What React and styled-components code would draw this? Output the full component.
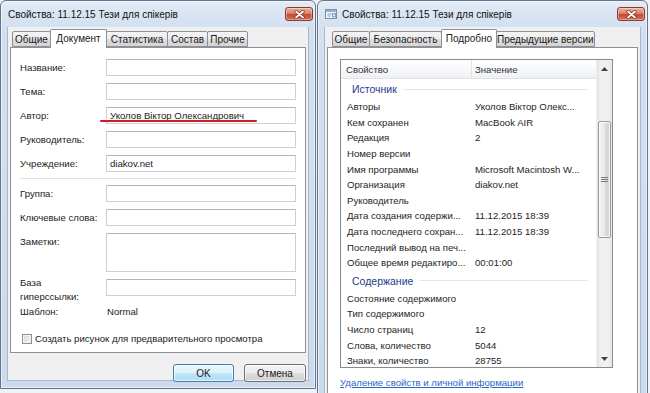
import React from 'react';
import styled, { createGlobalStyle } from 'styled-components';

const GlobalStyle = createGlobalStyle`
  html, body {
    margin: 0;
    padding: 0;
  }
  body {
    width: 650px;
    height: 393px;
    overflow: hidden;
    font-family: "Liberation Sans", Arial, sans-serif;
    font-size: 9.6px;
    color: #1b1b1b;
    background: #eef1f5;
  }
`;

const Desktop = styled.div`
  display: flex;
  align-items: flex-start;
  gap: 1px;
  width: 650px;
  height: 393px;
  overflow: hidden;
`;

const Window = styled.div`
  flex: 0 0 ${p => p.$width}px;
  height: ${p => p.$height}px;
  box-sizing: border-box;
  display: flex;
  flex-direction: column;
  padding: 0 7px 7px;
  border: 1px solid #62748c;
  border-radius: 6px 6px 0 0;
  background: linear-gradient(to bottom, #e2ebf6 0px, #d3e0f0 26px, #cbdaec 100%);
  box-shadow: inset 0 0 0 1px rgba(255, 255, 255, 0.55);
`;

const TitleBar = styled.div`
  display: flex;
  align-items: center;
  gap: 4px;
  height: 26px;
  flex: 0 0 26px;
  color: #111;
  font-size: 10px;
`;

const TitleText = styled.span`
  flex: 1;
  white-space: nowrap;
  overflow: hidden;
`;

const CloseButton = styled.div`
  flex: 0 0 28px;
  height: 14px;
  margin-right: -5px;
  display: flex;
  align-items: center;
  justify-content: center;
  box-sizing: border-box;
  border: 1px solid #8a3b2c;
  border-radius: 3px;
  background: linear-gradient(to bottom, #eab3a4 0%, #d9826c 45%, #c44a31 55%, #d9705a 100%);
  box-shadow: inset 0 0 0 1px rgba(255, 255, 255, 0.35);
`;

const Client = styled.div`
  flex: 1;
  display: flex;
  flex-direction: column;
  min-height: 0;
  background: #f0f0f0;
  border: 1px solid #a9b8cb;
  border-top: none;
  margin: 0 -1px;
  padding: 0 1px;
`;

const TabStrip = styled.div`
  display: flex;
  align-items: flex-end;
  height: 18px;
  margin-top: 2px;
  padding-left: ${p => p.$indent}px;
  position: relative;
  z-index: 1;
`;

const Tab = styled.div`
  flex: 0 0 ${p => p.$w}px;
  box-sizing: border-box;
  height: ${p => (p.$active ? 19 : 16)}px;
  margin-right: -1px;
  margin-bottom: ${p => (p.$active ? -1 : 0)}px;
  display: flex;
  align-items: center;
  justify-content: center;
  padding-bottom: ${p => (p.$active ? 2 : 0)}px;
  border: 1px solid #8d9099;
  border-bottom: ${p => (p.$active ? 'none' : '1px solid #8d9099')};
  border-radius: 2px 2px 0 0;
  background: ${p =>
    p.$active
      ? '#fff'
      : 'linear-gradient(to bottom, #f4f4f4 0%, #ececec 50%, #dedede 51%, #d4d4d4 100%)'};
  position: relative;
  z-index: ${p => (p.$active ? 2 : 1)};
  white-space: nowrap;
  color: #1b1b1b;
  font-size: 10px;
`;

const Panel = styled.div`
  box-sizing: border-box;
  margin: 0 1px;
  height: ${p => (p.$h ? `${p.$h}px` : 'auto')};
  flex: ${p => (p.$h ? '0 0 auto' : '1')};
  background: #fff;
  border: 1px solid #8d9099;
  padding: ${p => p.$pad};
`;

/* Документ tab */

const FieldRow = styled.div`
  display: flex;
  align-items: flex-start;
  margin-top: ${p => p.$gap || 0}px;
`;

const Label = styled.div`
  flex: 0 0 86px;
  line-height: ${p => (p.$wrap ? 14 : 17)}px;
  margin-top: ${p => (p.$wrap ? -3 : 0)}px;
`;

const TextBox = styled.div`
  flex: 1;
  position: relative;
  box-sizing: border-box;
  height: ${p => p.$h || 17}px;
  line-height: 15px;
  padding-left: 3px;
  border: 1px solid #cdd0d5;
  border-top-color: #b2b5bb;
  background: #fff;
  white-space: nowrap;
`;

const PlainValue = styled.div`
  flex: 1;
  line-height: 14px;
  padding-left: 1px;
`;

const Plain = styled.div`
  flex: 0 0 86px;
  line-height: 14px;
`;

const RedMark = styled.div`
  position: absolute;
  left: -7px;
  top: 12px;
  width: 157px;
  height: 2px;
  border-radius: 1px;
  background: #d11a22;
`;

const Separator = styled.div`
  height: 1px;
  margin: 6px 0 6px;
  background: #dcdfe3;
`;

const CheckRow = styled.label`
  display: flex;
  align-items: center;
  gap: 3px;
  margin-top: 14px;
  margin-left: 2px;
  line-height: 12px;
`;

const CheckBox = styled.span`
  width: 10px;
  height: 10px;
  box-sizing: border-box;
  border: 1px solid #8e8f8f;
  background: linear-gradient(135deg, #d9d9d9 0%, #f2f2f2 100%);
  box-shadow: inset 0 0 0 1px #f4f4f4;
`;

const ButtonBar = styled.div`
  display: flex;
  justify-content: flex-end;
  gap: 10px;
  margin-top: 11px;
  padding-right: 1px;
`;

const Button = styled.div`
  width: ${p => p.$w}px;
  height: 18px;
  box-sizing: border-box;
  display: flex;
  align-items: center;
  justify-content: center;
  border: 1px solid ${p => (p.$default ? '#3c7fb1' : '#707070')};
  border-radius: 3px;
  background: ${p =>
    p.$default
      ? 'linear-gradient(to bottom, #ecf7fd 0%, #ddf1fb 50%, #c3e6f8 51%, #b2dcf3 100%)'
      : 'linear-gradient(to bottom, #f4f4f4 0%, #ebebeb 50%, #dddddd 51%, #cfcfcf 100%)'};
  box-shadow: inset 0 0 0 1px rgba(255, 255, 255, 0.7);
  color: #1b1b1b;
  font-size: 10px;
`;

/* Подробно tab */

const ListView = styled.div`
  display: flex;
  width: 273px;
  height: 309px;
  box-sizing: border-box;
  border: 1px solid #868a91;
  background: #fff;
`;

const ListBody = styled.div`
  flex: 1;
  display: flex;
  flex-direction: column;
  overflow: hidden;
`;

const HeaderRow = styled.div`
  display: flex;
  height: 19px;
  flex: 0 0 19px;
  box-sizing: border-box;
  border-bottom: 1px solid #dfe2e6;
  background: linear-gradient(to bottom, #ffffff 0%, #f6f7f9 60%, #eef0f3 100%);
  color: #333;
`;

const HeaderCell = styled.div`
  flex: 0 0 ${p => p.$w}px;
  box-sizing: border-box;
  display: flex;
  align-items: center;
  padding-left: ${p => p.$pad}px;
  border-right: 1px solid #e1e3e7;
`;

const GroupRow = styled.div`
  display: flex;
  align-items: center;
  flex: 0 0 20px;
  height: 20px;
  padding: 0 8px 0 11px;
  color: #1e3a8c;
  font-size: 10.5px;
`;

const GroupLine = styled.div`
  flex: 1;
  height: 1px;
  margin-left: 6px;
  background: #e2e7ef;
`;

const PropRow = styled.div`
  display: flex;
  align-items: center;
  flex: 0 0 15.6px;
  height: 15.6px;
  white-space: nowrap;
  color: #1e1e1e;
`;

const PropName = styled.div`
  flex: 0 0 131px;
  box-sizing: border-box;
  padding-left: 6px;
  overflow: hidden;
`;

const PropValue = styled.div`
  flex: 1;
  padding-left: 3px;
  overflow: hidden;
`;

const ScrollBar = styled.div`
  flex: 0 0 15px;
  display: flex;
  flex-direction: column;
  background: linear-gradient(to right, #e4e4e4 0%, #f1f1f1 30%, #f1f1f1 70%, #e6e6e6 100%);
  border-left: 1px solid #efefef;
`;

const ArrowButton = styled.div`
  flex: 0 0 17px;
  display: flex;
  align-items: center;
  justify-content: center;
  margin-top: ${p => (p.$down ? 'auto' : 0)};
`;

const Thumb = styled.div`
  margin: 44px 1px 0;
  height: 117px;
  box-sizing: border-box;
  display: flex;
  align-items: center;
  justify-content: center;
  border: 1px solid #9a9a9a;
  border-radius: 2px;
  background: linear-gradient(to right, #f3f3f3 0%, #e9e9e9 50%, #d9d9d9 51%, #d4d4d4 100%);
  box-shadow: inset 0 0 0 1px rgba(255, 255, 255, 0.8);
`;

const Link = styled.a`
  display: block;
  margin-top: 9px;
  color: #2a67c4;
  text-decoration: underline;
  line-height: 12px;
`;

const CloseGlyph = () => (
  <svg width="11" height="9" viewBox="0 0 11 9">
    <path d="M2 1.5 L9 7.5 M9 1.5 L2 7.5" stroke="#7a2a1e" strokeWidth="3.2" strokeLinecap="round" />
    <path d="M2 1.5 L9 7.5 M9 1.5 L2 7.5" stroke="#fff" strokeWidth="1.8" strokeLinecap="round" />
  </svg>
);

const PropsIcon = () => (
  <svg width="13" height="12" viewBox="0 0 13 12">
    <rect x="0.5" y="1.5" width="11" height="9" fill="#f4f7fb" stroke="#7d8ea6" />
    <rect x="1" y="2" width="10" height="2" fill="#8fb0d8" />
    <path d="M2.5 6h4M2.5 8h3" stroke="#8a96a8" />
    <rect x="7.5" y="5.5" width="3" height="3.5" fill="#d7e5f5" stroke="#6f8bb0" strokeWidth="0.8" />
  </svg>
);

const Arrow = ({ down }) => (
  <svg width="7" height="4" viewBox="0 0 7 4">
    <path d={down ? 'M0 0 H7 L3.5 4 Z' : 'M0 4 H7 L3.5 0 Z'} fill="#404040" />
  </svg>
);

const Grip = () => (
  <svg width="7" height="6" viewBox="0 0 7 6">
    <path d="M0 0.5h7M0 2.5h7M0 4.5h7" stroke="#7c7c7c" />
  </svg>
);

const source = [
  ['Авторы', 'Уколов Віктор Олекс...'],
  ['Кем сохранен', 'MacBook AIR'],
  ['Редакция', '2'],
  ['Номер версии', ''],
  ['Имя программы', 'Microsoft Macintosh W...'],
  ['Организация', 'diakov.net'],
  ['Руководитель', ''],
  ['Дата создания содержи...', '11.12.2015 18:39'],
  ['Дата последнего сохран...', '11.12.2015 18:39'],
  ['Последний вывод на печ...', ''],
  ['Общее время редактиро...', '00:01:00'],
];

const content = [
  ['Состояние содержимого', ''],
  ['Тип содержимого', ''],
  ['Число страниц', '12'],
  ['Слова, количество', '5044'],
  ['Знаки, количество', '28755'],
];

const title = 'Свойства: 11.12.15 Тези для спікерів';

function DocumentDialog() {
  return (
    <Window $width={316} $height={389}>
      <TitleBar>
        <TitleText>{title}</TitleText>
        <CloseButton><CloseGlyph /></CloseButton>
      </TitleBar>
      <Client>
        <TabStrip $indent={3}>
          <Tab $w={39}>Общие</Tab>
          <Tab $w={57} $active>Документ</Tab>
          <Tab $w={62}>Статистика</Tab>
          <Tab $w={41}>Состав</Tab>
          <Tab $w={41}>Прочие</Tab>
        </TabStrip>
        <Panel $h={306} $pad="11px 9px 0 9px">
          <FieldRow><Label>Название:</Label><TextBox /></FieldRow>
          <FieldRow $gap={7}><Label>Тема:</Label><TextBox /></FieldRow>
          <FieldRow $gap={7}>
            <Label>Автор:</Label>
            <TextBox>Уколов Віктор Олександрович<RedMark /></TextBox>
          </FieldRow>
          <FieldRow $gap={7}><Label>Руководитель:</Label><TextBox /></FieldRow>
          <FieldRow $gap={7}><Label>Учреждение:</Label><TextBox>diakov.net</TextBox></FieldRow>
          <Separator />
          <FieldRow><Label>Группа:</Label><TextBox /></FieldRow>
          <FieldRow $gap={7}><Label>Ключевые слова:</Label><TextBox /></FieldRow>
          <FieldRow $gap={7}><Label>Заметки:</Label><TextBox $h={39} /></FieldRow>
          <FieldRow $gap={7}>
            <Label $wrap>База<br />гиперссылки:</Label>
            <TextBox />
          </FieldRow>
          <FieldRow $gap={1}><Plain>Шаблон:</Plain><PlainValue>Normal</PlainValue></FieldRow>
          <CheckRow><CheckBox />Создать рисунок для предварительного просмотра</CheckRow>
        </Panel>
        <ButtonBar>
          <Button $w={61} $default>OK</Button>
          <Button $w={62}>Отмена</Button>
        </ButtonBar>
      </Client>
    </Window>
  );
}

function DetailsDialog() {
  return (
    <Window $width={331} $height={420}>
      <TitleBar>
        <PropsIcon />
        <TitleText>{title}</TitleText>
        <CloseButton><CloseGlyph /></CloseButton>
      </TitleBar>
      <Client>
        <TabStrip $indent={6}>
          <Tab $w={38}>Общие</Tab>
          <Tab $w={73}>Безопасность</Tab>
          <Tab $w={56} $active>Подробно</Tab>
          <Tab $w={97}>Предыдущие версии</Tab>
        </TabStrip>
        <Panel $pad="11px 0 0 12px">
          <ListView>
            <ListBody>
              <HeaderRow>
                <HeaderCell $w={131} $pad={5}>Свойство</HeaderCell>
                <HeaderCell $w={125} $pad={3}>Значение</HeaderCell>
              </HeaderRow>
              <GroupRow>Источник<GroupLine /></GroupRow>
              {source.map(([name, value]) => (
                <PropRow key={name}>
                  <PropName>{name}</PropName>
                  <PropValue>{value}</PropValue>
                </PropRow>
              ))}
              <GroupRow>Содержание<GroupLine /></GroupRow>
              {content.map(([name, value]) => (
                <PropRow key={name}>
                  <PropName>{name}</PropName>
                  <PropValue>{value}</PropValue>
                </PropRow>
              ))}
            </ListBody>
            <ScrollBar>
              <ArrowButton><Arrow /></ArrowButton>
              <Thumb><Grip /></Thumb>
              <ArrowButton $down><Arrow down /></ArrowButton>
            </ScrollBar>
          </ListView>
          <Link>Удаление свойств и личной информации</Link>
        </Panel>
      </Client>
    </Window>
  );
}

export default function App() {
  return (
    <>
      <GlobalStyle />
      <Desktop>
        <DocumentDialog />
        <DetailsDialog />
      </Desktop>
    </>
  );
}
